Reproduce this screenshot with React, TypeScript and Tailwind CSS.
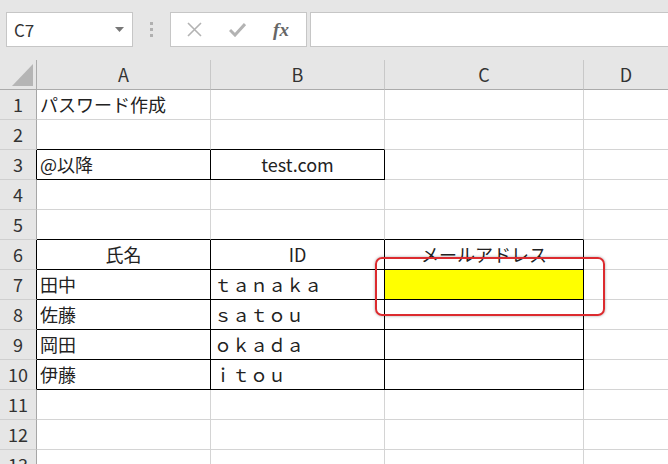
import React from "react";

const FONT = { fontFamily: '"Noto Sans CJK JP", "Noto Sans", sans-serif' };

type Cell = {
  text?: string;
  center?: boolean;
  rb?: boolean; // right border black
  bb?: boolean; // bottom border black
  yellow?: boolean;
};

const rows: { hb?: boolean; cells: Cell[] }[] = [
  { cells: [{ text: "パスワード作成" }, {}, {}, {}] },
  { cells: [{ bb: true }, { bb: true }, {}, {}] },
  { hb: true, cells: [{ text: "@以降", rb: true, bb: true }, { text: "test.com", center: true, rb: true, bb: true }, {}, {}] },
  { cells: [{}, {}, {}, {}] },
  { cells: [{ bb: true }, { bb: true }, { bb: true }, {}] },
  { hb: true, cells: [{ text: "氏名", center: true, rb: true, bb: true }, { text: "ID", center: true, rb: true, bb: true }, { text: "メールアドレス", center: true, rb: true, bb: true }, {}] },
  { hb: true, cells: [{ text: "田中", rb: true, bb: true }, { text: "ｔａｎａｋａ", rb: true, bb: true }, { rb: true, bb: true, yellow: true }, {}] },
  { hb: true, cells: [{ text: "佐藤", rb: true, bb: true }, { text: "ｓａｔｏｕ", rb: true, bb: true }, { rb: true, bb: true }, {}] },
  { hb: true, cells: [{ text: "岡田", rb: true, bb: true }, { text: "ｏｋａｄａ", rb: true, bb: true }, { rb: true, bb: true }, {}] },
  { hb: true, cells: [{ text: "伊藤", rb: true, bb: true }, { text: "ｉｔｏｕ", rb: true, bb: true }, { rb: true, bb: true }, {}] },
  { cells: [{}, {}, {}, {}] },
  { cells: [{}, {}, {}, {}] },
  { cells: [{}, {}, {}, {}] },
];

export default function App() {
  return (
    <div className="relative w-[668px] h-[464px] overflow-hidden bg-[#e6e6e6] text-[#222]" style={FONT}>
      {/* Formula bar */}
      <div className="flex h-[60px] items-start pt-[12px]">
        <div className="ml-[6px] flex h-[35px] w-[127px] items-center justify-between border border-[#c6c6c6] bg-white pl-[7px] pr-[8px]">
          <span className="text-[17px] text-[#333]">C7</span>
          <svg width="9" height="5" viewBox="0 0 9 5">
            <path d="M0 0 L9 0 L4.5 5 Z" fill="#777" />
          </svg>
        </div>
        <div className="flex h-[35px] w-[37px] flex-col items-center justify-center gap-[3px]">
          <div className="h-[3px] w-[3px] bg-[#b0b0b0]" />
          <div className="h-[3px] w-[3px] bg-[#b0b0b0]" />
          <div className="h-[3px] w-[3px] bg-[#b0b0b0]" />
        </div>
        <div className="flex h-[35px] w-[137px] items-center border border-[#c6c6c6] bg-white">
          <div className="flex w-[44px] justify-center pl-[2px]">
            <svg width="15" height="15" viewBox="0 0 15 15">
              <path d="M1 1 L14 14 M14 1 L1 14" stroke="#b3b3b3" strokeWidth="1.6" />
            </svg>
          </div>
          <div className="flex w-[44px] justify-center">
            <svg width="17" height="14" viewBox="0 0 17 14">
              <path d="M1 7 L6 12 L16 1" stroke="#b3b3b3" strokeWidth="3" fill="none" />
            </svg>
          </div>
          <div className="flex w-[44px] justify-center">
            <span
              className="text-[19px] font-bold italic text-[#666] leading-none"
              style={{ fontFamily: '"Liberation Serif", serif' }}
            >
              fx
            </span>
          </div>
        </div>
        <div className="ml-[3px] h-[35px] flex-1 border-y border-l border-[#c6c6c6] bg-white" />
      </div>

      {/* Sheet grid */}
      <div className="grid grid-cols-[37px_174px_174px_199px_84px]">
        {/* header row */}
        <div className="relative h-[30px] border-r border-b border-[#ababab] bg-[#e6e6e6]">
          <svg className="absolute left-[12px] top-[4px]" width="21" height="22" viewBox="0 0 21 22">
            <path d="M21 0 L21 22 L0 22 Z" fill="#b5b5b5" />
          </svg>
        </div>
        {["A", "B", "C", "D"].map((c, i) => (
          <div
            key={c}
            className={`flex h-[30px] items-center justify-center border-b border-[#ababab] bg-[#e6e6e6] text-[18px] text-[#333] ${i < 3 ? "border-r border-r-[#c8c8c8]" : ""}`}
          >
            {c}
          </div>
        ))}

        {rows.map((r, ri) => (
          <React.Fragment key={ri}>
            <div
              className={`flex h-[30px] items-center justify-center border-b border-b-[#cfcfcf] border-r bg-[#e6e6e6] text-[18px] text-[#333] ${r.hb ? "border-r-black" : "border-r-[#a6a6a6]"}`}
            >
              {ri + 1}
            </div>
            {r.cells.map((c, ci) => (
              <div
                key={ci}
                className={`flex h-[30px] items-center overflow-visible whitespace-nowrap text-[18px] border-b ${ci < 3 ? "border-r" : ""} ${c.rb ? "border-r-black" : "border-r-[#d4d4d4]"} ${c.bb ? "border-b-black" : "border-b-[#d4d4d4]"} ${c.yellow ? "bg-[#ffff00]" : "bg-white"} ${c.center ? "justify-center" : "pl-[3px]"}`}
              >
                {c.text}
              </div>
            ))}
          </React.Fragment>
        ))}
      </div>

      {/* red highlight */}
      <div className="absolute left-[375px] top-[257px] h-[59px] w-[230px] rounded-[7px] border-2 border-[#dc2b2f] shadow-[0_0_3px_rgba(0,0,0,0.35)]" />
    </div>
  );
}
